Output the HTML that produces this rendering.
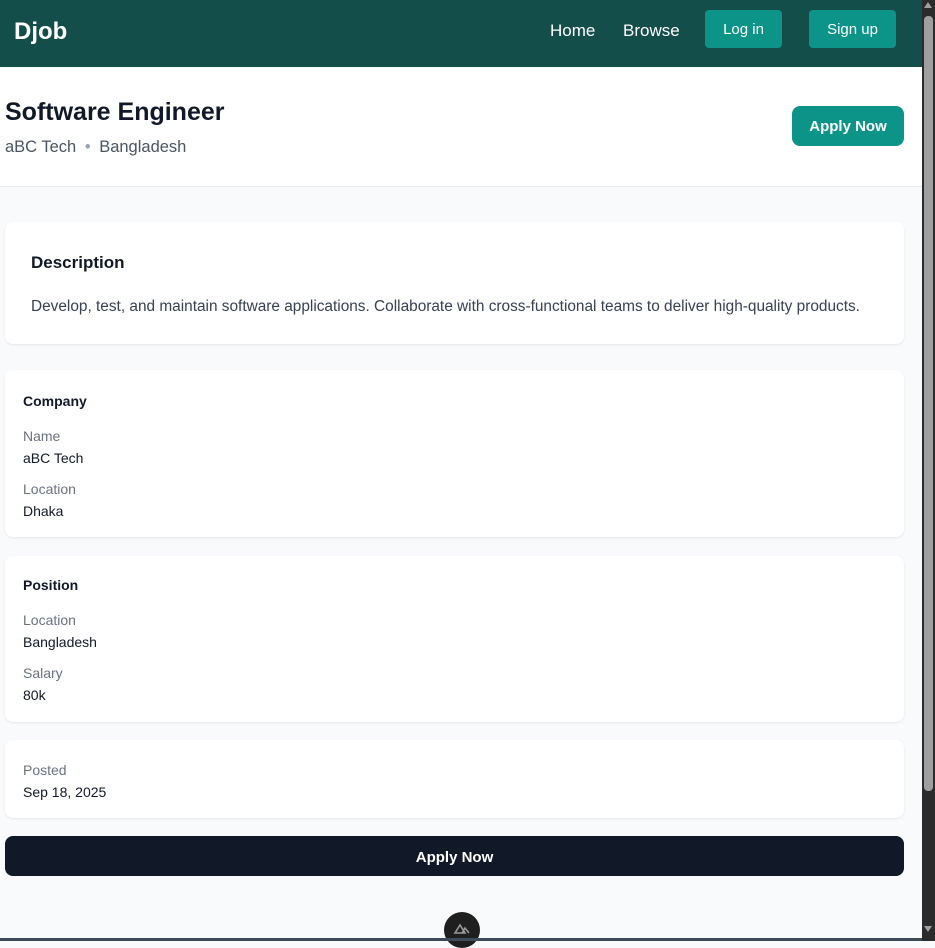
<!DOCTYPE html>
<html><head><meta charset="utf-8"><style>
*{margin:0;padding:0;box-sizing:border-box}
body{width:935px;height:941px;overflow:hidden;background:#f9fafb;font-family:"Liberation Sans",sans-serif;position:relative}
.a{position:absolute;white-space:nowrap}
.nav{left:0;top:0;width:922px;height:67px;background:#134e4a}
.btn{background:#0d9488;color:#fff;border-radius:4px;text-align:center;font-size:15px;line-height:39px;height:38px}
.card{background:#fff;border-radius:8px;box-shadow:0 1px 2px rgba(0,0,0,.08);left:5px;width:899px}
.lab{color:#6b7280;font-size:14px}
.val{color:#111827;font-size:14px}
.h{font-weight:bold;font-size:14px;color:#111827}
</style></head><body>
<div class="a nav"></div>
<div class="a" style="left:14px;top:18px;font-size:24px;font-weight:bold;color:#fff">Djob</div>
<div class="a" style="left:550px;top:21px;font-size:17px;color:#fff">Home</div>
<div class="a" style="left:623px;top:21px;font-size:17px;color:#fff">Browse</div>
<div class="a btn" style="left:705px;top:10px;width:77px">Log in</div>
<div class="a btn" style="left:809px;top:10px;width:87px">Sign up</div>
<div class="a" style="left:0;top:67px;width:922px;height:120px;background:#fff;border-bottom:1px solid #e5e7eb"></div>
<div class="a" style="left:5px;top:98px;font-size:25px;font-weight:bold;color:#111827">Software Engineer</div>
<div class="a" style="left:5px;top:138px;font-size:16.5px;color:#4b5563">aBC Tech <span style="color:#9ca3af;margin:0 4px">•</span> Bangladesh</div>
<div class="a" style="left:792px;top:106px;width:112px;height:40px;background:#0d9488;border-radius:8px;color:#fff;font-weight:bold;font-size:15px;line-height:42px;text-align:center">Apply Now</div>
<div class="a card" style="top:222px;height:122px"></div>
<div class="a" style="left:31px;top:253px;font-size:17px;font-weight:bold;color:#111827">Description</div>
<div class="a" style="left:31px;top:298px;font-size:15.4px;color:#374151">Develop, test, and maintain software applications. Collaborate with cross-functional teams to deliver high-quality products.</div>
<div class="a card" style="top:370px;height:167px"></div>
<div class="a h" style="left:23px;top:393px">Company</div>
<div class="a lab" style="left:23px;top:428px">Name</div>
<div class="a val" style="left:23px;top:450px">aBC Tech</div>
<div class="a lab" style="left:23px;top:481px">Location</div>
<div class="a val" style="left:23px;top:503px">Dhaka</div>
<div class="a card" style="top:556px;height:166px"></div>
<div class="a h" style="left:23px;top:577px">Position</div>
<div class="a lab" style="left:23px;top:612px">Location</div>
<div class="a val" style="left:23px;top:634px">Bangladesh</div>
<div class="a lab" style="left:23px;top:665px">Salary</div>
<div class="a val" style="left:23px;top:687px">80k</div>
<div class="a card" style="top:740px;height:78px"></div>
<div class="a lab" style="left:23px;top:762px">Posted</div>
<div class="a val" style="left:23px;top:784px">Sep 18, 2025</div>
<div class="a" style="left:5px;top:836px;width:899px;height:40px;background:#111827;border-radius:8px;color:#fff;font-weight:bold;font-size:15px;line-height:43px;text-align:center">Apply Now</div>
<div class="a" style="left:444px;top:912px;width:36px;height:36px;border-radius:18px;background:#1f1f1f"></div>
<svg class="a" style="left:453px;top:921px" width="18" height="14" viewBox="0 0 18 14"><path d="M2 12 L7 4 L12 12 Z M9 12 L12 7 L16 12" fill="none" stroke="#999" stroke-width="1.6"/></svg>
<div class="a" style="left:0;top:938px;width:922px;height:3px;background:#3c4a5a"></div>
<div class="a" style="left:922px;top:0;width:13px;height:941px;background:#2b2b2b"></div>
<div class="a" style="left:924px;top:16px;width:9px;height:775px;background:#9f9f9f;border-radius:4px"></div>
<div class="a" style="left:924px;top:2px;width:0;height:0;border-left:4px solid transparent;border-right:4px solid transparent;border-bottom:6px solid #a0a0a0"></div>
<div class="a" style="left:924px;top:926px;width:0;height:0;border-left:4px solid transparent;border-right:4px solid transparent;border-top:6px solid #a0a0a0"></div>
</body></html>
